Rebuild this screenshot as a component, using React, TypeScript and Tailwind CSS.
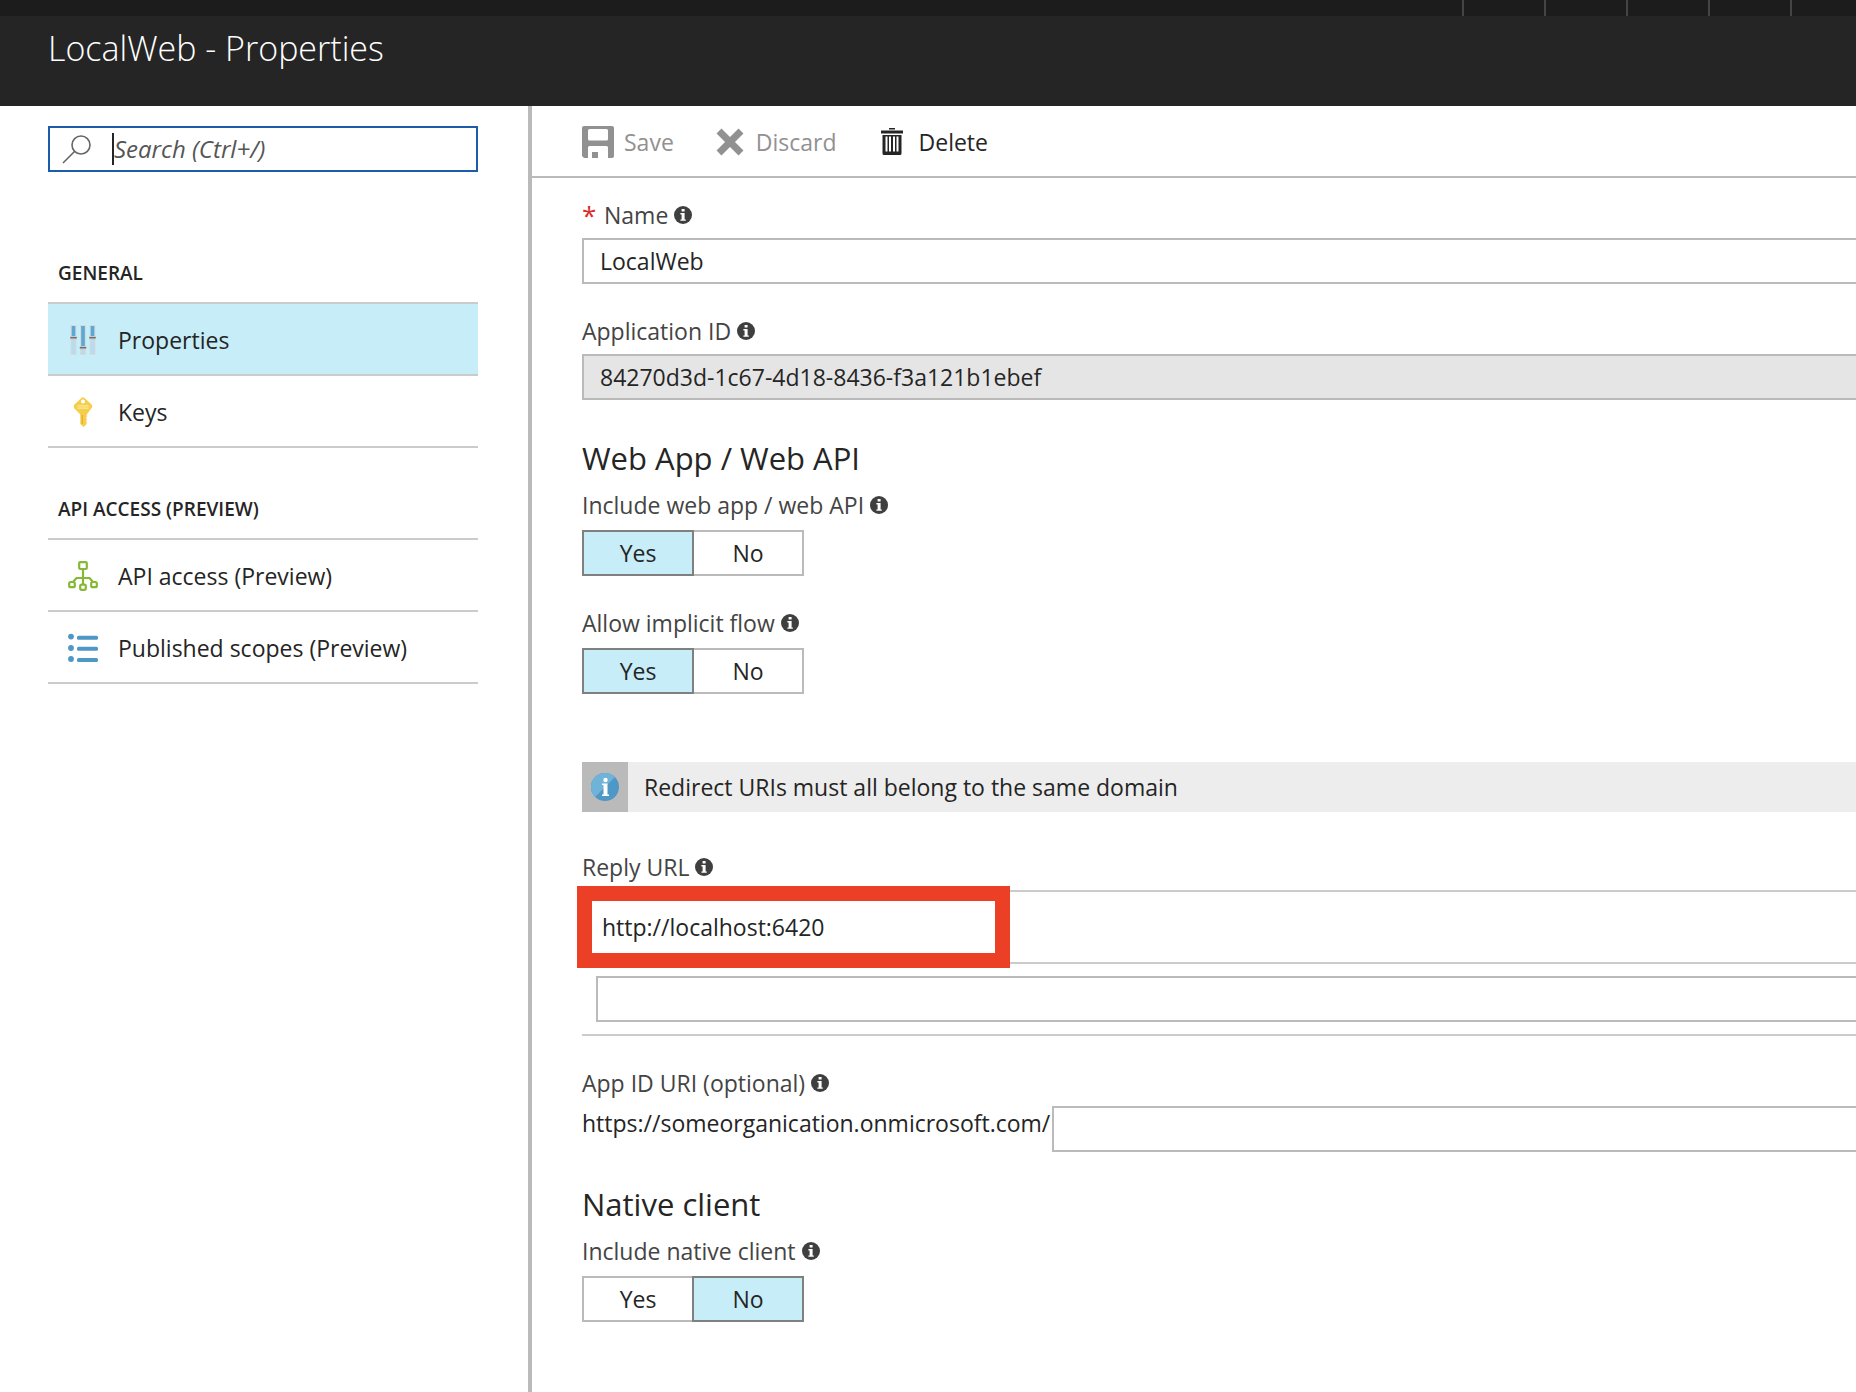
import { useState, type ReactNode } from 'react';

const InfoDot = () => (
  <svg viewBox="0 0 18 18" className="w-[18px] h-[18px] shrink-0" aria-hidden="true">
    <circle cx="9" cy="9" r="9" fill="#3f3f3f" />
    <path d="M7.6 3h3v2.6h-3zM6.4 7h4.2v6.4h1.2v1.4H6.4v-1.4h1.2V8.4H6.4z" fill="#fff" />
  </svg>
);

const SearchIcon = () => (
  <svg viewBox="0 0 30 30" className="w-[30px] h-[30px] shrink-0" fill="none" stroke="#666" strokeWidth="1.6" aria-hidden="true">
    <circle cx="19" cy="11" r="9" />
    <path d="M12.5 17.5 1 29" />
  </svg>
);

const SlidersIcon = () => (
  <svg viewBox="0 0 30 30" className="w-[30px] h-[30px]" aria-hidden="true">
    {[
      { x: 3, y: 11 },
      { x: 12.5, y: 21 },
      { x: 22, y: 11 },
    ].map(({ x, y }) => (
      <g key={x}>
        <rect x={x} y="0.5" width="5" height="29" fill="#b9dcec" stroke="#d5d9dc" />
        <rect x={x + 0.7} y="1" width="3.6" height={y} fill="#59a9d2" />
        <rect x={x - 0.7} y={y} width="6.4" height="3.4" fill="#c9c9c9" />
        <rect x={x - 0.7} y={y + 1} width="6.4" height="1.4" fill="#6f6f6f" />
      </g>
    ))}
  </svg>
);

const KeyIcon = () => (
  <svg viewBox="0 0 30 30" className="w-[30px] h-[30px]" aria-hidden="true">
    <path
      d="M13.4 1Q15 -.6 16.6 1L23.6 7.6Q24.8 9 23.9 10.6L19.6 16.4Q18.6 17.2 18.6 18L19 19.5 18 21 19 22.5 18 24 19 25.5 18.2 27.5 15.5 30 12.3 27V18Q12.3 17.2 11.4 16.4L6.2 11.2Q5.2 9.2 6.4 7.6Z"
      fill="#f5cf49"
    />
    <circle cx="15" cy="4.6" r="2" fill="#fff" />
    <path d="M9.5 8.9h11M9.5 11.2h11" stroke="#fbe9a4" strokeWidth="1.3" />
    <path d="M14.3 18v9" stroke="#e8a93a" strokeWidth="1.2" />
  </svg>
);

const ApiIcon = () => (
  <svg viewBox="0 0 30 30" className="w-[30px] h-[30px]" fill="none" stroke="#86b836" strokeWidth="2.2" aria-hidden="true">
    <rect x="11.2" y="1.2" width="7.6" height="6.8" rx="1" />
    <rect x="1.2" y="21" width="5.6" height="5.2" rx="1.5" />
    <rect x="12.2" y="23.6" width="5.6" height="5.2" rx="1.5" />
    <rect x="23.2" y="21" width="5.6" height="5.2" rx="1.5" />
    <path d="M15 8v15.500M5 21l3.500-4h13l3.500 4" />
  </svg>
);

const ListIcon = () => (
  <svg viewBox="0 0 30 30" className="w-[30px] h-[30px]" fill="#4f97c6" aria-hidden="true">
    <circle cx="3" cy="3.600" r="2.900" />
    <circle cx="3" cy="15" r="2.900" />
    <circle cx="3" cy="26" r="2.900" />
    <rect x="9" y="2.700" width="21" height="4" rx="1.500" />
    <rect x="9" y="13.700" width="21" height="4" rx="1.500" />
    <rect x="9" y="24.900" width="21" height="4" rx="1.500" />
  </svg>
);

const SaveIcon = () => (
  <svg viewBox="0 0 32 32" className="w-8 h-8" aria-hidden="true">
    <path
      fillRule="evenodd"
      fill="#919191"
      d="M2 0h28q2 0 2 2v28q0 2-2 2h-4V21.500q0-1.500-1.500-1.500H7.500Q6 20 6 21.500V32H2L0 30V2Q0 0 2 0zM7.500 3Q6 3 6 4.500V13q0 1.500 1.500 1.500h17Q26 14.500 26 13V4.500Q26 3 24.500 3z"
    />
    <rect x="10" y="26" width="6" height="6" fill="#919191" />
  </svg>
);

const DiscardIcon = () => (
  <svg viewBox="0 0 28 28" className="w-7 h-7" aria-hidden="true">
    <path d="M3 3l22 22M25 3L3 25" stroke="#919191" strokeWidth="7" />
  </svg>
);

const TrashIcon = () => (
  <svg viewBox="0 0 22 28" className="w-[22px] h-7" aria-hidden="true">
    <path
      fillRule="evenodd"
      fill="#252525"
      d="M8 0h6v1.500H8zM0 2.500h22v3H0zM1.500 7h19v18.500q0 1.500-1.500 1.500H3q-1.500 0-1.500-1.500zM4.500 8.500v15h2v-15zM8 8.500v15h2v-15zM12 8.500v15h2v-15zM15.500 8.500v15h2v-15z"
    />
  </svg>
);

const navGroups = [
  {
    title: 'GENERAL',
    items: [
      { label: 'Properties', icon: <SlidersIcon />, active: true },
      { label: 'Keys', icon: <KeyIcon />, active: false },
    ],
  },
  {
    title: 'API ACCESS (PREVIEW)',
    items: [
      { label: 'API access (Preview)', icon: <ApiIcon />, active: false },
      { label: 'Published scopes (Preview)', icon: <ListIcon />, active: false },
    ],
  },
];

interface FieldLabelProps {
  htmlFor?: string;
  id?: string;
  required?: boolean;
  children: ReactNode;
}

function FieldLabel({ htmlFor, id, required, children }: FieldLabelProps) {
  return (
    <div className="flex items-center gap-[6px] h-[30px] text-[#444]">
      {required && <span className="w-4 text-[26px] text-[#d92b2b]">*</span>}
      {htmlFor ? <label htmlFor={htmlFor}>{children}</label> : <span id={id}>{children}</span>}
      <InfoDot />
    </div>
  );
}

function Toggle({ id, label, initial }: { id: string; label: string; initial: 'Yes' | 'No' }) {
  const [value, setValue] = useState(initial);

  return (
    <div>
      <FieldLabel id={id}>{label}</FieldLabel>
      <div role="group" aria-labelledby={id} className="flex mt-[10px]">
        {(['Yes', 'No'] as const).map((option) => (
          <button
            key={option}
            type="button"
            aria-pressed={value === option}
            onClick={() => setValue(option)}
            className={`w-28 h-[46px] border-2 last:-ml-[2px] ${
              value === option ? 'relative bg-[#c7edf8] border-[#808080]' : 'bg-white border-[#bababa]'
            }`}
          >
            {option}
          </button>
        ))}
      </div>
    </div>
  );
}

export default function App() {
  const [name, setName] = useState('LocalWeb');
  const [replyUrl, setReplyUrl] = useState('http://localhost:6420');

  return (
    <div className="flex flex-col min-h-screen bg-white overflow-hidden font-['Open_Sans','Noto_Sans',sans-serif] text-[23px] leading-8 text-[#252525]">
      {/* Portal top bar */}
      <div className="flex justify-end h-4 bg-[#1c1c1c]">
        {[0, 1, 2, 3, 4].map((n) => (
          <div key={n} className="w-[82px] border-l-2 border-[#444] last:w-[66px]" />
        ))}
      </div>

      <header className="h-[90px] bg-[#252525] px-12 pt-2">
        <h1 className="text-[34px] leading-[48px] font-light text-white">LocalWeb - Properties</h1>
      </header>

      <div className="flex flex-1">
        {/* Sidebar */}
        <nav className="w-[532px] shrink-0 border-r-4 border-[#bababa] pl-12 pr-[50px] pt-5">
          <div className="flex items-center h-[46px] border-2 border-[#1b5cab] pl-3">
            <SearchIcon />
            <span className="w-[2px] h-8 ml-5 bg-[#252525]" />
            <input
              type="text"
              aria-label="Search"
              placeholder="Search (Ctrl+/)"
              className="flex-1 min-w-0 outline-none text-[24px] italic placeholder:text-[#555]"
            />
          </div>

          <div className="flex flex-col gap-12 mt-[88px]">
            {navGroups.map((group) => (
              <section key={group.title}>
                <h2 className="pl-[10px] pb-4 text-[19px] leading-[26px] font-semibold">{group.title}</h2>
                <ul className="border-t-2 border-[#cbcbcb]">
                  {group.items.map((item) => (
                    <li key={item.label} className="border-b-2 border-[#cbcbcb]">
                      <a
                        href="#"
                        className={`flex items-center gap-5 h-[70px] pt-[2px] pl-5 ${item.active ? 'bg-[#c7edf8]' : ''}`}
                      >
                        {item.icon}
                        {item.label}
                      </a>
                    </li>
                  ))}
                </ul>
              </section>
            ))}
          </div>
        </nav>

        {/* Blade content */}
        <main className="flex-1 min-w-0">
          <div className="flex items-center h-[72px] border-b-2 border-[#bababa] pt-[2px] pl-[50px]">
            <button type="button" disabled className="flex items-center gap-[10px] text-[#919191]">
              <SaveIcon />
              Save
            </button>
            <button type="button" disabled className="flex items-center gap-3 ml-[42px] text-[#919191]">
              <DiscardIcon />
              Discard
            </button>
            <button type="button" className="flex items-center gap-4 ml-11">
              <TrashIcon />
              Delete
            </button>
          </div>

          <form className="pl-[50px] pt-[22px] pb-[70px]">
            <FieldLabel htmlFor="name" required>
              Name
            </FieldLabel>
            <input
              id="name"
              value={name}
              onChange={(e) => setName(e.target.value)}
              className="block w-full h-[46px] mt-2 px-4 border-2 border-r-0 border-[#bababa] outline-none"
            />

            <div className="mt-8">
              <FieldLabel htmlFor="app-id">Application ID</FieldLabel>
              <input
                id="app-id"
                readOnly
                value="84270d3d-1c67-4d18-8436-f3a121b1ebef"
                className="block w-full h-[46px] mt-2 px-4 border-2 border-r-0 border-[#bababa] bg-[#e5e5e5] outline-none"
              />
            </div>

            <h2 className="mt-[38px] mb-3 text-[31px] leading-10">Web App / Web API</h2>
            <div className="flex flex-col gap-8">
              <Toggle id="web-app" label="Include web app / web API" initial="Yes" />
              <Toggle id="implicit-flow" label="Allow implicit flow" initial="Yes" />
            </div>

            <div className="flex items-center h-[50px] mt-[68px] bg-[#ededed]">
              <div className="flex items-center justify-center w-[46px] h-full bg-[#bababa]">
                <svg viewBox="0 0 28 28" className="w-7 h-7" aria-hidden="true">
                  <circle cx="14" cy="14" r="14" fill="#4f97c6" />
                  <path d="M4.100 23.900A14 14 0 0 1 23.900 4.100Z" fill="#6fb3d8" />
                  <circle cx="14.500" cy="7" r="2.200" fill="#fff" />
                  <path d="M11 10.500h5.500v11H18V23h-7v-1.500h1.500V12H11z" fill="#fff" />
                </svg>
              </div>
              <p className="pl-4">Redirect URIs must all belong to the same domain</p>
            </div>

            {/* Reply URLs */}
            <div className="mt-10">
              <FieldLabel htmlFor="reply-url">Reply URL</FieldLabel>
              <div className="relative h-[74px] mt-2 border-y-2 border-[#cbcbcb]">
                <input
                  id="reply-url"
                  value={replyUrl}
                  onChange={(e) => setReplyUrl(e.target.value)}
                  className="absolute -left-[5px] -top-[6px] w-[433px] h-[82px] px-[10px] border-15 border-[#eb4025] bg-white outline-none"
                />
              </div>
              <div className="py-3 pl-[14px] border-b-2 border-[#cbcbcb]">
                <input
                  aria-label="New reply URL"
                  className="block w-full h-[46px] px-4 border-2 border-r-0 border-[#bababa] outline-none"
                />
              </div>
            </div>

            <div className="mt-8">
              <FieldLabel htmlFor="app-id-uri">App ID URI (optional)</FieldLabel>
              <div className="flex gap-[2px] mt-2">
                <span className="leading-[34px]">https://someorganication.onmicrosoft.com/</span>
                <input
                  id="app-id-uri"
                  className="flex-1 min-w-0 h-[46px] px-4 border-2 border-r-0 border-[#bababa] outline-none"
                />
              </div>
            </div>

            <h2 className="mt-8 mb-3 text-[31px] leading-10">Native client</h2>
            <Toggle id="native-client" label="Include native client" initial="No" />
          </form>
        </main>
      </div>
    </div>
  );
}
